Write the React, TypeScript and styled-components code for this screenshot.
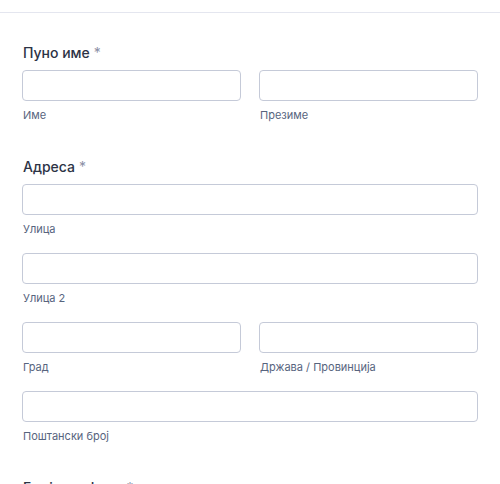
import React from 'react';
import styled, { createGlobalStyle } from 'styled-components';

const GlobalStyle = createGlobalStyle`
  html, body {
    margin: 0;
    padding: 0;
    background: #ffffff;
  }
  body {
    font-family: Inter, "Noto Sans", "Liberation Sans", sans-serif;
    color: #2c3345;
  }
`;

const Page = styled.div`
  width: 500px;
  height: 484px;
  overflow: hidden;
  background: #ffffff;
`;

const TopBar = styled.div`
  height: 12px;
  border-bottom: 1px solid #e4e6ef;
`;

const Form = styled.form`
  display: flex;
  flex-direction: column;
  gap: 35px;
  padding: 30px 22px 0 22px;
`;

const Field = styled.div`
  display: flex;
  flex-direction: column;
`;

const Label = styled.div`
  font-size: 14px;
  line-height: 20px;
  font-weight: 450;
  color: #2c3345;
  margin: 0 0 7px 1px;
`;

const Required = styled.span`
  color: #8c90a6;
  font-weight: 400;
  margin-left: 4px;
`;

const Rows = styled.div`
  display: flex;
  flex-direction: column;
  gap: 17px;
`;

const Row = styled.div<{ $cols: number }>`
  display: grid;
  grid-template-columns: repeat(${p => p.$cols}, 1fr);
  column-gap: 18px;
`;

const Cell = styled.div`
  display: flex;
  flex-direction: column;
`;

const Input = styled.input`
  box-sizing: border-box;
  width: 100%;
  height: 31px;
  margin: 0;
  border: 1px solid #c5cad8;
  border-radius: 4px;
  background: #ffffff;
  font-family: inherit;
  font-size: 14px;
  padding: 0 10px;
  outline: none;
`;

const SubLabel = styled.label`
  margin-top: 7px;
  padding-left: 1px;
  font-size: 11px;
  line-height: 14px;
  color: #57647e;
`;

type FieldDef = { rows: string[][] };

const Section = ({ title, rows }: { title: string } & FieldDef) => (
  <Field>
    <Label>
      {title}
      <Required>*</Required>
    </Label>
    <Rows>
      {rows.map((row, i) => (
        <Row key={i} $cols={row.length}>
          {row.map(sub => (
            <Cell key={sub}>
              <Input type="text" />
              <SubLabel>{sub}</SubLabel>
            </Cell>
          ))}
        </Row>
      ))}
    </Rows>
  </Field>
);

export default function App() {
  return (
    <Page>
      <GlobalStyle />
      <TopBar />
      <Form>
        <Section title="Пуно име" rows={[['Име', 'Презиме']]} />
        <Section
          title="Адреса"
          rows={[['Улица'], ['Улица 2'], ['Град', 'Држава / Провинција'], ['Поштански број']]}
        />
        <Section title="Број телефона" rows={[['']]} />
      </Form>
    </Page>
  );
}
